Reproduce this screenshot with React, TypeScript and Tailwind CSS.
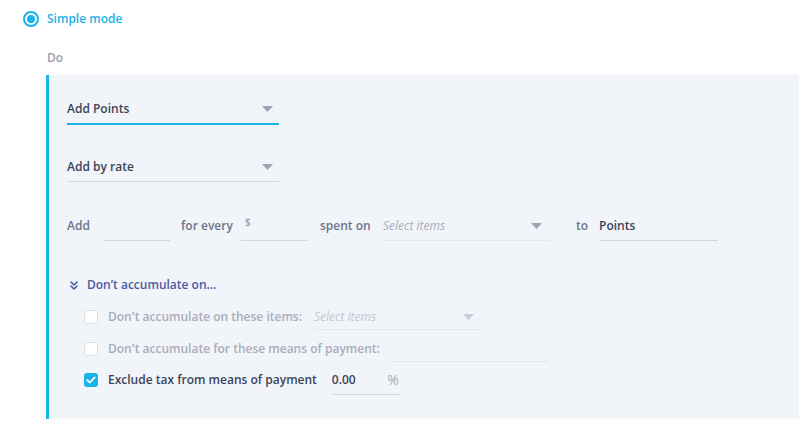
function Arrow({ light }: { light?: boolean }) {
  return (
    <svg width="11" height="6" viewBox="0 0 11 6" className={light ? 'text-[#c9ccd8]' : 'text-[#9ea2b5]'}>
      <path d="M0 0h11L5.5 6z" fill="currentColor" />
    </svg>
  );
}

function Checkbox({ checked }: { checked?: boolean }) {
  if (checked) {
    return (
      <span className="flex h-[14px] w-[14px] shrink-0 items-center justify-center rounded-[3px] bg-[#1ab3e6]">
        <svg width="10" height="8" viewBox="0 0 10 8">
          <path d="M1.3 4.2 3.8 6.5 8.7 1.4" stroke="white" strokeWidth="1.8" fill="none" strokeLinecap="round" strokeLinejoin="round" />
        </svg>
      </span>
    );
  }
  return <span className="h-[14px] w-[14px] shrink-0 rounded-[3px] border border-[#dcdfe6] bg-white" />;
}

export default function App() {
  return (
    <div className="h-[421px] w-[799px] overflow-hidden bg-white text-[12px] font-semibold" style={{ fontFamily: '"Open Sans", sans-serif' }}>
      <div className="flex items-center gap-[8px] pl-[23px] pt-[10px]">
        <span className="flex h-[16px] w-[16px] items-center justify-center rounded-full border-2 border-[#1ab3e6]">
          <span className="h-[8px] w-[8px] rounded-full bg-[#1ab3e6]" />
        </span>
        <span className="text-[#1ab3e6]">Simple mode</span>
      </div>

      <div className="mt-[21px] pl-[47px] text-[#9a9eaf]">Do</div>

      <div className="ml-[46px] mt-[8px] h-[344px] border-l-[3px] border-[#1ab3e6] bg-[#f1f4f8] pl-[18px] pt-[19px]">
        <div className="flex h-[31px] w-[212px] items-center justify-between border-b-2 border-[#1ab3e6] pr-[6px] text-[#3d4459]">
          <span>Add Points</span>
          <Arrow />
        </div>

        <div className="mt-[27px] flex h-[30px] w-[212px] items-center justify-between border-b border-[#d3d6de] pr-[6px] text-[#3d4459]">
          <span>Add by rate</span>
          <Arrow />
        </div>

        <div className="mt-[29px] flex h-[30px] items-center text-[#6f7489]">
          <span className="w-[36px]">Add</span>
          <span className="h-[30px] w-[67px] border-b border-[#d3d6de]" />
          <span className="ml-[11px] w-[60px]">for every</span>
          <span className="flex h-[30px] w-[67px] items-start border-b border-[#d3d6de] pl-[4px] pt-[4px] text-[10px] text-[#9a9eaf]">$</span>
          <span className="ml-[12px] w-[63px]">spent on</span>
          <span className="flex h-[30px] w-[167px] items-center justify-between border-b border-[#e3e6ec] pr-[8px]">
            <span className="font-normal italic text-[#a9adbd]">Select items</span>
            <Arrow />
          </span>
          <span className="ml-[26px] w-[23px]">to</span>
          <span className="flex h-[30px] w-[119px] items-center border-b border-[#d3d6de] text-[#3d4459]">Points</span>
        </div>

        <div className="mt-[35px] flex items-center gap-[9px] pl-[3px] text-[#4a5ba6]">
          <svg width="8" height="9" viewBox="0 0 8 9" fill="none" stroke="currentColor" strokeWidth="1.6" strokeLinecap="round" strokeLinejoin="round">
            <path d="M1 1l3 3 3-3M1 5l3 3 3-3" />
          </svg>
          <span>Don’t accumulate on...</span>
        </div>

        <div className="mt-[9px] flex h-[28px] items-center pl-[17px]">
          <Checkbox />
          <span className="ml-[10px] text-[#a9adbd]">Don't accumulate on these items:</span>
          <span className="ml-[12px] mt-[1px] flex h-[26px] w-[168px] items-center justify-between self-start border-b border-[#e3e6ec] pr-[8px]">
            <span className="font-normal italic text-[#c3c6d2]">Select items</span>
            <Arrow light />
          </span>
        </div>

        <div className="mt-[4px] flex h-[28px] items-center pl-[17px]">
          <Checkbox />
          <span className="ml-[10px] text-[#a9adbd]">Don't accumulate for these means of payment:</span>
          <span className="ml-[9px] mt-[1px] h-[26px] w-[159px] self-start border-b border-[#e3e6ec]" />
        </div>

        <div className="mt-[3px] flex h-[28px] items-center pl-[17px]">
          <Checkbox checked />
          <span className="ml-[10px] text-[#3d4459]">Exclude tax from means of payment</span>
          <span className="-mt-[1px] ml-[15px] flex h-[30px] w-[68px] items-center justify-between self-start border-b border-[#d3d6de]">
            <span className="text-[#3d4459]">0.00</span>
            <span className="pr-[1px] text-[14px] font-normal text-[#a9adbd]">%</span>
          </span>
        </div>
      </div>
    </div>
  );
}
